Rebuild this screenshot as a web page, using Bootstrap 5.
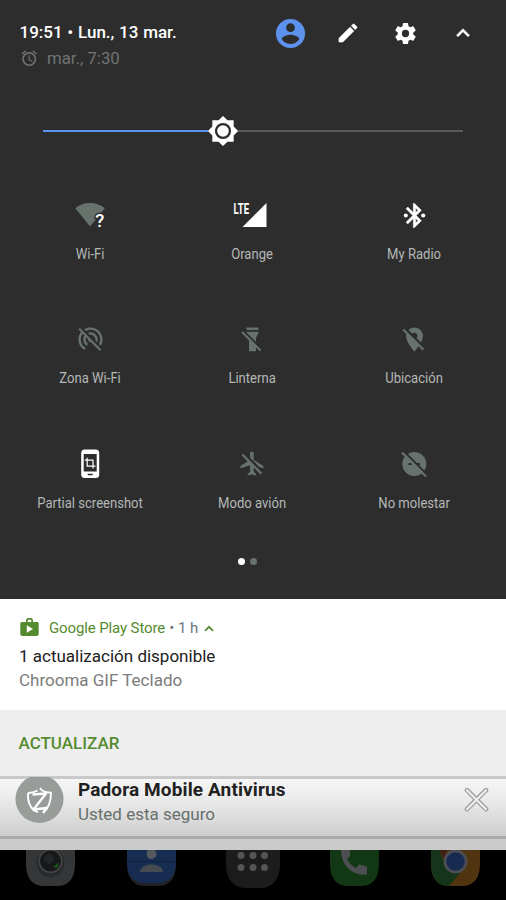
<!DOCTYPE html>
<html lang="es">
<head>
<meta charset="utf-8">
<meta name="viewport" content="width=device-width, initial-scale=1">
<title>Ajustes rápidos</title>
<link href="https://cdn.jsdelivr.net/npm/bootstrap@5.3.0/dist/css/bootstrap.min.css" rel="stylesheet">
<style>
body{font-family:Roboto,"Liberation Sans",sans-serif;background:#000;width:506px;height:900px;overflow:hidden}
svg{display:block;flex:none}
.quick{background:#2d2d2d;height:599px}
.topbar{height:82px;padding:20px 14.5px 0 19.5px}
.clock{font-size:17px;font-weight:500;line-height:24px;color:#fff;word-spacing:.5px}
.alarm{font-size:16.8px;line-height:28px;color:#6f7472;gap:9px}
.tool{width:57.3px;height:26px}
.slider{height:32px;margin:33px 43px 0}
.track-on{width:165px;height:2.5px;background:#5c92ec}
.track-off{height:2.5px;background:#5b5b5b}
.thumb{margin:0 -1px}
.tiles{padding:48px 10.5px 0 9px}
.tile{height:124.3px;color:#67726d}
.tile.on{color:#fff}
.tile-icon{height:40px}
.tile-name{font-size:15px;line-height:20px;margin-top:9px;color:#b4b8b6;transform:scaleX(.87)}
.dot{width:7px;height:7px;background:#67726d}
.pager{gap:4.5px;margin-top:-10.4px;padding-right:11px}
.note{height:111px;padding:18px 19px 0}
.green{color:#558b2f}
.app-row{font-size:15px;line-height:22px}
.app-name{margin-left:9px;letter-spacing:-.12px}
.note-title{font-size:17px;line-height:24px;color:#212121;margin-top:5px}
.note-text{font-size:17px;line-height:23px;color:#7b7b7b;padding-top:.6px}
.action{height:66px;background:#eee;padding:0 18.5px;font-size:17px;font-weight:500;line-height:66px}
.antivirus{height:63px;border-top:3px solid #c9c9c9;border-bottom:3px solid #aaa;background:linear-gradient(#f6f6f6,#e9e9e9 40%,#cecece);padding:0 17px 0 15px}
.av-copy{padding-left:14px}
.av-title{font-size:19px;font-weight:700;line-height:24px;letter-spacing:.12px;color:#212121;margin-top:-1px}
.av-text{font-size:17px;line-height:25px;color:#68706c}
.strip{height:11px;background:#cbcbcb}
.logo{margin-top:-2px}
</style>
<script src="https://cdn.jsdelivr.net/npm/bootstrap@5.3.0/dist/js/bootstrap.bundle.min.js"></script>
</head>
<body>
<section class="quick">
  <header class="topbar d-flex justify-content-between">
    <div>
      <div class="clock text-nowrap">19:51 • Lun., 13 mar.</div>
      <div class="alarm d-flex align-items-center"><svg width="18.500" height="18.500" viewBox="0 0 24 24" fill="currentColor"><path d="M22 5.720l-4.600-3.860-1.290 1.530 4.600 3.860L22 5.720zM7.880 3.390L6.600 1.860 2 5.710l1.290 1.530 4.590-3.850zM12.500 8H11v6l4.750 2.850.75-1.230-4-2.370V8zM12 4c-4.970 0-9 4.030-9 9s4.020 9 9 9a9 9 0 0 0 0-18zm0 16c-3.870 0-7-3.130-7-7s3.130-7 7-7 7 3.130 7 7-3.130 7-7 7z"/></svg><span>mar., 7:30</span></div>
    </div>
    <div class="d-flex">
      <div class="tool d-flex align-items-center justify-content-center"><svg width="35" height="35" viewBox="0 0 24 24" fill="#5c92ec"><path fill-rule="evenodd" d="M12 2a10 10 0 1 0 0 20 10 10 0 0 0 0-20zm0 3a3 3 0 1 1 0 6 3 3 0 0 1 0-6zm0 14.2c-2.5 0-4.71-1.28-6-3.22.03-1.99 4-3.08 6-3.08s5.97 1.09 6 3.08a7.2 7.2 0 0 1-6 3.22z"/></svg></div>
      <div class="tool d-flex align-items-center justify-content-center"><svg width="24" height="24" viewBox="0 0 24 24" fill="#fff" stroke="#fff" stroke-width=".7" stroke-linejoin="round"><path d="M3 17.25V21h3.75L17.81 9.94l-3.75-3.75L3 17.25zM20.71 7.04a1 1 0 0 0 0-1.41l-2.34-2.34a1 1 0 0 0-1.41 0l-1.53 1.53 3.75 3.75 1.53-1.53z"/></svg></div>
      <div class="tool d-flex align-items-center justify-content-center"><svg width="25" height="25" viewBox="0 0 24 24" fill="#fff"><path d="M19.43 12.98c.04-.32.07-.64.07-.98s-.03-.66-.07-.98l2.11-1.65c.19-.15.24-.42.12-.64l-2-3.46c-.12-.22-.39-.3-.61-.22l-2.49 1c-.52-.4-1.08-.73-1.69-.98l-.38-2.65A.488.488 0 0 0 14 2h-4c-.25 0-.46.18-.49.42l-.38 2.65c-.61.25-1.17.59-1.69.98l-2.49-1c-.23-.09-.49 0-.61.22l-2 3.46c-.13.22-.07.49.12.64l2.11 1.65c-.04.32-.07.65-.07.98s.03.66.07.98l-2.11 1.65c-.19.15-.24.42-.12.64l2 3.46c.12.22.39.3.61.22l2.49-1c.52.4 1.08.73 1.69.98l.38 2.65c.03.24.24.42.49.42h4c.25 0 .46-.18.49-.42l.38-2.65c.61-.25 1.17-.59 1.69-.98l2.49 1c.23.09.49 0 .61-.22l2-3.46c.12-.22.07-.49-.12-.64l-2.11-1.65zM12 15.5a3.5 3.5 0 1 1 0-7 3.5 3.5 0 0 1 0 7z"/></svg></div>
      <div class="tool d-flex align-items-center justify-content-center"><svg width="26" height="26" viewBox="0 0 24 24" fill="#fff" stroke="#fff" stroke-width=".5"><path d="M12 8l-6 6 1.41 1.41L12 10.83l4.59 4.58L18 14z"/></svg></div>
    </div>
  </header>

  <div class="slider d-flex align-items-center">
    <div class="track-on"></div>
    <svg class="thumb" width="32" height="32" viewBox="0 0 24 24"><path fill="#fff" d="M20 8.69V4h-4.69L12 .69 8.69 4H4v4.69L.69 12 4 15.31V20h4.69L12 23.31 15.31 20H20v-4.69L23.31 12 20 8.69z"/><circle cx="12" cy="12" r="5.2" fill="#fff" stroke="#2d2d2d" stroke-width="1.7"/></svg>
    <div class="track-off flex-fill"></div>
  </div>

  <div class="tiles">
    <div class="row g-0 text-center">
      <div class="col tile"><div class="tile-icon d-flex align-items-center justify-content-center"><svg width="40" height="40" viewBox="0 0 40 40"><path fill="#67726d" d="M5.3 13.2C9 10 14 8 20 8s11 2 14.8 5.2L20 31.5z"/><text transform="translate(25.2 31.8) scale(.98 1)" font-size="19" font-weight="500" fill="#fff" stroke="#2d2d2d" stroke-width="3" paint-order="stroke">?</text></svg></div><div class="tile-name">Wi-Fi</div></div>
      <div class="col tile on"><div class="tile-icon d-flex align-items-center justify-content-center"><svg width="40" height="40" viewBox="0 0 40 40" fill="#fff"><path d="M34.5 8v24H10.5z"/><text font-size="15" font-weight="700" transform="translate(1.6 18.8) scale(.64 1)" stroke="#2d2d2d" stroke-width="2" paint-order="stroke">LTE</text></svg></div><div class="tile-name">Orange</div></div>
      <div class="col tile on"><div class="tile-icon d-flex align-items-center justify-content-center"><svg width="29" height="29" viewBox="0 0 24 24" fill="currentColor"><circle cx="4.8" cy="12" r="1.7"/><circle cx="19.2" cy="12" r="1.7"/><path stroke="#fff" stroke-width=".4" d="M17.71 7.71L12 2h-1v7.59L6.41 5 5 6.41 10.59 12 5 17.59 6.41 19 11 14.41V22h1l5.71-5.71-4.3-4.29 4.3-4.29zM13 5.83l1.88 1.88L13 9.59V5.83zm1.88 10.46L13 18.17v-3.76l1.88 1.88z"/></svg></div><div class="tile-name">My Radio</div></div>
    </div>
    <div class="row g-0 text-center">
      <div class="col tile"><div class="tile-icon d-flex align-items-center justify-content-center"><svg width="29" height="29" viewBox="0 0 24 24" fill="currentColor"><path d="M17.56 14.24c.28-.69.44-1.45.44-2.24 0-3.31-2.69-6-6-6-.79 0-1.55.16-2.24.44l1.62 1.62c.2-.03.41-.06.62-.06 2.21 0 4 1.79 4 4 0 .21-.02.42-.05.63l1.61 1.61zM12 4c4.42 0 8 3.58 8 8 0 1.35-.35 2.62-.95 3.74l1.47 1.47C21.46 15.69 22 13.91 22 12c0-5.52-4.48-10-10-10-1.91 0-3.69.55-5.21 1.47l1.46 1.46C9.37 4.34 10.65 4 12 4zM3.27 2.5L2 3.77l2.1 2.1C2.79 7.57 2 9.69 2 12c0 3.7 2.01 6.92 4.99 8.65l1-1.73C5.61 17.53 4 14.96 4 12c0-1.76.57-3.38 1.53-4.69l1.43 1.44C6.36 9.68 6 10.8 6 12c0 2.22 1.21 4.15 3 5.19l1-1.74c-1.19-.7-2-1.97-2-3.45 0-.65.17-1.25.44-1.79l1.58 1.58L10 12c0 1.1.9 2 2 2l.21-.02.01.01 7.51 7.51L21 20.23 4.27 3.5l-1-1z"/></svg></div><div class="tile-name">Zona Wi-Fi</div></div>
      <div class="col tile"><div class="tile-icon d-flex align-items-center justify-content-center"><svg width="40" height="40" viewBox="0 0 40 40" fill="currentColor"><path d="M14.5 8.500h12V11h-12zM14.500 12.800h12c0 3-2.500 4.500-2.500 7V32.300h-7V19.800c0-2.500-2.500-4-2.500-7z"/><path d="M11.300 11.800l18.500 18.500" stroke="#2d2d2d" stroke-width="2" fill="none"/><path d="M10 13l18.500 18.500" stroke="currentColor" stroke-width="2.100" fill="none"/></svg></div><div class="tile-name">Linterna</div></div>
      <div class="col tile"><div class="tile-icon d-flex align-items-center justify-content-center"><svg width="29" height="29" viewBox="0 0 24 24" fill="currentColor"><path d="M12 6.5c1.38 0 2.5 1.12 2.5 2.5 0 .74-.33 1.39-.83 1.85l3.63 3.63c.98-1.86 1.7-3.8 1.7-5.48 0-3.87-3.13-7-7-7-1.98 0-3.76.83-5.04 2.15l3.19 3.19c.46-.52 1.11-.84 1.85-.84zm4.37 9.6l-4.63-4.63-.11-.11L3.27 3 2 4.27l3.18 3.18C5.07 7.95 5 8.47 5 9c0 5.25 7 13 7 13s1.67-1.85 3.38-4.35L18.73 21 20 19.73l-3.63-3.63z"/></svg></div><div class="tile-name">Ubicación</div></div>
    </div>
    <div class="row g-0 text-center">
      <div class="col tile on"><div class="tile-icon d-flex align-items-center justify-content-center"><svg width="40" height="40" viewBox="0 0 40 40"><rect x="11.200" y="5.600" width="18" height="28.400" rx="3.500" fill="#fff"/><path fill="#2d2d2d" d="M13.700 10h13v17.500h-13zM17.700 29.800h5v1.400h-5z"/><path fill="none" stroke="#fff" stroke-width="1.200" d="M17.200 13.800v8.400h8.300M14.700 16.200h8.300v8.400"/></svg></div><div class="tile-name">Partial screenshot</div></div>
      <div class="col tile"><div class="tile-icon d-flex align-items-center justify-content-center"><svg width="29" height="29" viewBox="0 0 24 24" fill="currentColor"><path d="M13 9V3.500c0-.83-.67-1.500-1.500-1.500S10 2.670 10 3.500v3.680l7.830 7.830L21 16v-2l-8-5zM3 5.270l4.990 4.990L2 14v2l8-2.500V19l-2 1.500V22l3.500-1 3.500 1v-1.500L13 19v-3.730L18.730 21 20 19.730 4.270 4 3 5.270z"/></svg></div><div class="tile-name">Modo avión</div></div>
      <div class="col tile"><div class="tile-icon d-flex align-items-center justify-content-center"><svg width="40" height="40" viewBox="0 0 40 40"><circle cx="20.300" cy="20" r="12" fill="currentColor"/><path stroke="#2d2d2d" stroke-width="2" d="M14.500 20h3.500M23 20h3"/><path stroke="#2d2d2d" stroke-width="2" d="M9.500 7l23 23"/><path stroke="currentColor" stroke-width="2.100" d="M8 8.500l24 24"/></svg></div><div class="tile-name">No molestar</div></div>
    </div>
  </div>
  <div class="pager d-flex justify-content-center"><span class="dot rounded-circle bg-white"></span><span class="dot rounded-circle"></span></div>
</section>

<section class="note bg-white">
  <div class="app-row d-flex align-items-center">
    <svg width="21" height="20" viewBox="-.5 0.500 21 20"><path fill="#558b2f" fill-rule="evenodd" d="M2.500 4.500h4V3c0-1.400 1-2.400 2.300-2.400h2.400c1.300 0 2.300 1 2.300 2.400v1.500h4c1 0 1.700.7 1.700 1.600v10.300c0 1.200-.8 2-2 2H2.800c-1.200 0-2-.8-2-2V6.100c0-.9.700-1.600 1.700-1.600zM8.200 4.500h3.600V3c0-.4-.3-.7-.8-.7H9c-.5 0-.8.3-.8.700zM7.300 7.800v7.400l6.200-3.700z"/></svg>
    <span class="green app-name">Google Play Store</span><span class="text-secondary ms-1">• 1 h</span>
    <svg width="22" height="7" viewBox="-6 0 22 7"><path d="M1 5.800L5 1.800l4 4" fill="none" stroke="#558b2f" stroke-width="1.700"/></svg>
  </div>
  <div class="note-title">1 actualización disponible</div>
  <div class="note-text">Chrooma GIF Teclado</div>
</section>
<div class="action green">ACTUALIZAR</div>

<section class="antivirus d-flex">
  <svg class="logo" width="49" height="48" viewBox="0 0 49 48"><path fill="#989d99" d="M15 0h19a24 24 0 1 1-19 0z"/><g fill="none" stroke="#fff" stroke-width="1.900" stroke-linejoin="round"><path d="M25 11l2 2.500c3 1.700 6 2.200 9 2.200 0 9-2 15-7.500 19M13 16c3.500 0 7-1 9.500-2.500M13 16c-.5 7 1 13 6 17.500l4 1.500"/><path stroke-width="2.300" d="M17.500 17.500L31 16.500 18.500 32.500 32 31 28 36"/></g></svg>
  <div class="flex-fill av-copy"><div class="av-title">Padora Mobile Antivirus</div><div class="av-text">Usted esta seguro</div></div>
  <svg class="mt-2" width="25" height="26" viewBox="0 .8 25 26"><g fill="none" stroke-linecap="round"><path stroke="#989b98" stroke-width="4.600" d="M3 4l19 19M22 4L3 23"/><path stroke="#eee" stroke-width="2.300" d="M3 4l19 19M22 4L3 23"/></g></svg>
</section>
<div class="strip"></div>

<nav class="row g-0">
  <div class="col d-flex justify-content-center"><svg width="49" height="37" viewBox="0 0 49 37"><path fill="#343638" d="M0 0h49v14c0 15-7 22-18 22H18C7 36 0 29 0 14z"/><circle cx="24.500" cy="13" r="14" fill="#292a2b"/><circle cx="24.500" cy="11" r="12" fill="#444647"/><circle cx="24.500" cy="11" r="10.500" fill="#171819"/><circle cx="23" cy="9" r="5" fill="#222527"/><path d="M27 17l6-5-1 6z" fill="#195018"/></svg></div>
  <div class="col d-flex justify-content-center"><svg width="49" height="37" viewBox="0 0 49 37"><path fill="#202223" d="M0 0h49v14c0 15-7 22-18 22H18C7 36 0 29 0 14z"/><path fill="#162c50" d="M0 0h49v12c0 14-7 21-18 21H18C7 33 0 26 0 12z"/><path fill="#10213c" d="M0 11h49v1H0z"/><circle cx="24.500" cy="4" r="5" fill="#555a61"/><path fill="#464b51" d="M13 22c0-10 23-10 23 0z"/></svg></div>
  <div class="col d-flex justify-content-center"><svg width="54" height="39" viewBox="0 0 54 39"><path fill="#1c1c1c" d="M0 0h54v14c0 16-8 24-20 24H20C8 38 0 30 0 14z"/><g fill="#555"><circle cx="15" cy="5.500" r="3.500"/><circle cx="27" cy="5.500" r="3.500"/><circle cx="38.500" cy="5.500" r="3.500"/><circle cx="15" cy="17.500" r="3.500"/><circle cx="27" cy="17.500" r="3.500"/><circle cx="38.500" cy="17.500" r="3.500"/></g></svg></div>
  <div class="col d-flex justify-content-center"><svg width="49" height="37" viewBox="0 0 49 37"><path fill="#123714" d="M0 0h49v14c0 15-7 22-18 22H18C7 36 0 29 0 14z"/><path fill="#4c4f51" d="M11 0h9v6l-3 3c2 4 5 7 9 9l3-3.500 8 2v8c-15 2-26-10-26-24.500z"/></svg></div>
  <div class="col d-flex justify-content-center"><svg width="49" height="37" viewBox="0 0 49 37"><path fill="#50340f" d="M0 0h49v14c0 15-7 22-18 22H18C7 36 0 29 0 14z"/><path fill="#15351a" d="M0 0h8l6 14 16 8-12 14C7 36 0 29 0 14z"/><path fill="#3f1e14" d="M8 0h8l-3 8z"/><circle cx="24.500" cy="11.500" r="12" fill="#4b4e52"/><circle cx="24.500" cy="11.500" r="9.300" fill="#172b50"/></svg></div>
</nav>
</body>
</html>
